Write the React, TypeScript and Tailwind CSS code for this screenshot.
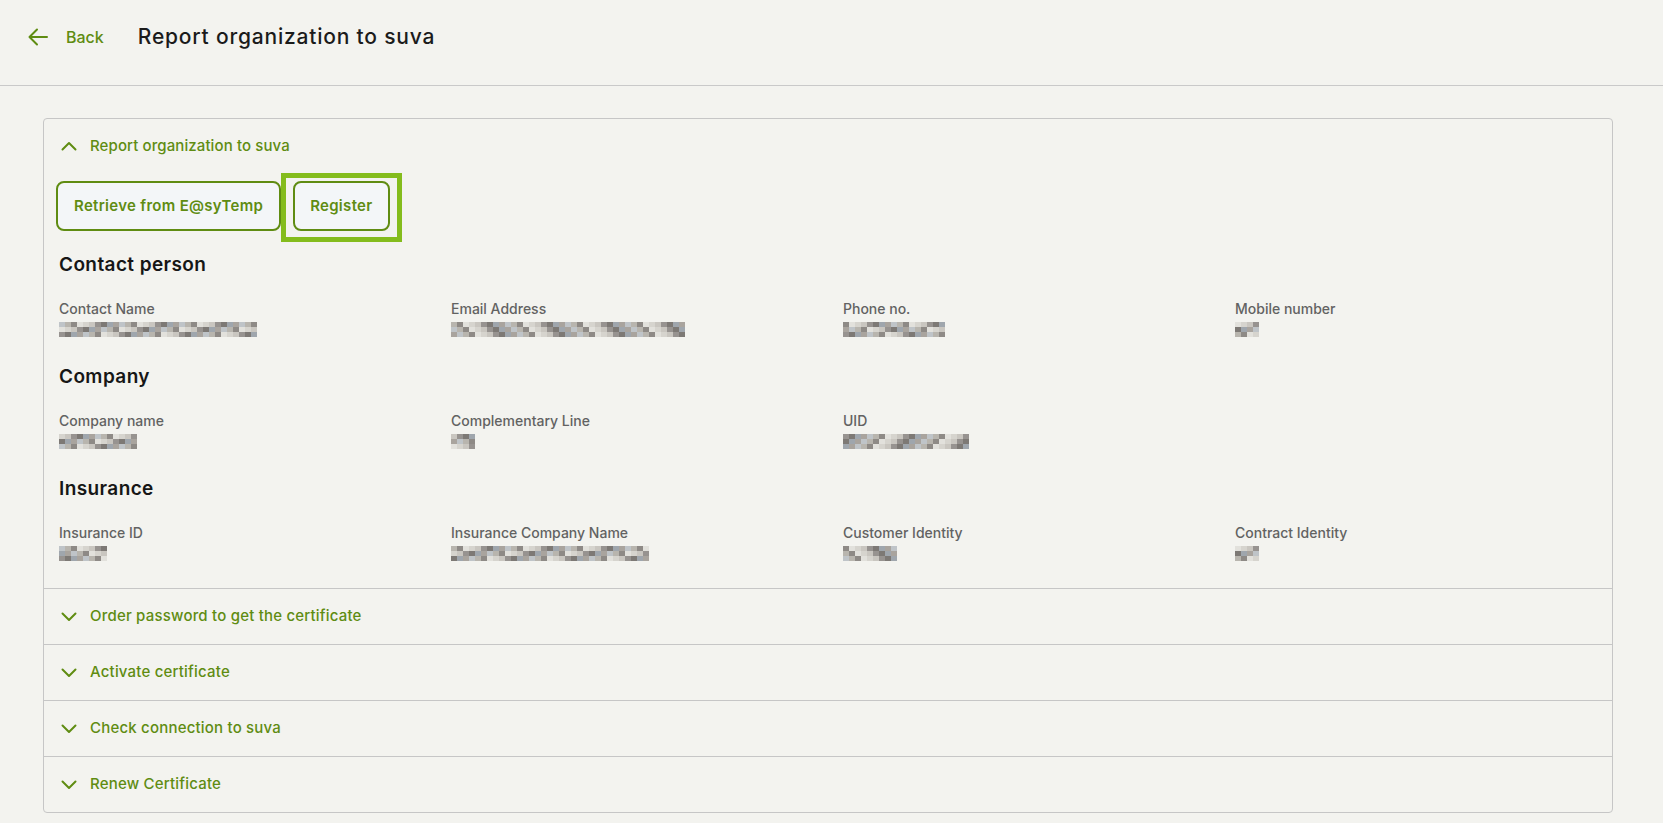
import { ReactNode } from "react";

const font = { fontFamily: "Inter, 'Noto Sans', sans-serif" };

// greys used to fake the obscured field values
const tones = [
  "bg-[#a9a49e]",
  "bg-[#8e8a86]",
  "bg-[#c9c6c0]",
  "bg-[#9fa6ad]",
  "bg-[#b8b5ae]",
  "bg-[#d6d4ce]",
  "bg-[#7d7975]",
  "bg-[#bfc4c8]",
  "bg-[#e2e1dc]",
  "bg-[#979390]",
];

function Redacted({ width, seed }: { width: number; seed: number }) {
  const cols = Math.max(1, Math.round(width / 6));
  const cells: ReactNode[] = [];
  let s = seed * 9301 + 49297;
  for (let r = 0; r < 3; r++) {
    for (let c = 0; c < cols; c++) {
      s = (s * 9301 + 49297) % 233280;
      const tone = tones[s % tones.length];
      cells.push(<span key={`${r}-${c}`} className={`block h-[5px] w-[6px] ${tone}`} />);
    }
  }
  return (
    <div className="mt-[3px] grid h-[15px] w-max" style={{ gridTemplateColumns: `repeat(${cols}, 6px)` }}>
      {cells}
    </div>
  );
}

function ChevronDown() {
  return (
    <svg width="16" height="10" viewBox="0 0 16 10" fill="none" stroke="#5f8c12" strokeWidth="2" strokeLinecap="round" strokeLinejoin="round">
      <path d="M1.5 1.5 8 8l6.5-6.5" />
    </svg>
  );
}

function ChevronUp() {
  return (
    <svg width="16" height="10" viewBox="0 0 16 10" fill="none" stroke="#5f8c12" strokeWidth="2" strokeLinecap="round" strokeLinejoin="round">
      <path d="M1.5 8.5 8 2l6.5 6.5" />
    </svg>
  );
}

type Field = { label: string; width: number };

function FieldGrid({ fields, seed }: { fields: Field[]; seed: number }) {
  return (
    <div className="mt-[22px] grid grid-cols-4">
      {fields.map((f, i) => (
        <div key={f.label} className="px-[15px]">
          <div className="h-5 text-[14px] leading-5 font-medium text-[#626262]">{f.label}</div>
          <Redacted width={f.width} seed={seed + i * 7} />
        </div>
      ))}
    </div>
  );
}

function SectionTitle({ children, first }: { children: ReactNode; first?: boolean }) {
  return (
    <h2 className={`${first ? "mt-[22px]" : "mt-[28px]"} px-[15px] text-[19px] leading-6 font-semibold tracking-[0.4px] text-[#161616]`}>
      {children}
    </h2>
  );
}

function CollapsedRow({ title }: { title: string }) {
  return (
    <div className="flex h-[56px] items-center gap-[13px] border-t border-[#c6c6c6] pl-[17px]">
      <ChevronDown />
      <span className="text-[15px] font-medium tracking-[0.2px] text-[#5f8c12]">{title}</span>
    </div>
  );
}

export default function App() {
  return (
    <div className="min-h-screen bg-[#f3f3ef] pb-[11px]" style={font}>
      <header className="flex h-[86px] items-center border-b border-[#c9c9c9] pb-[11px]">
        <button className="ml-[28px] flex items-center gap-[18px] text-[#5f8c12]">
          <svg width="20" height="18" viewBox="0 0 20 18" fill="none" stroke="#5f8c12" strokeWidth="2" strokeLinecap="round" strokeLinejoin="round">
            <path d="M19 9H1.5M9 1.5 1.5 9 9 16.5" />
          </svg>
          <span className="text-[16px] font-medium">Back</span>
        </button>
        <h1 className="ml-[34px] text-[21px] font-medium tracking-[0.8px] text-[#1b1b1b]">Report organization to suva</h1>
      </header>

      <div className="ml-[43px] mr-[50px] mt-[32px] rounded-[4px] border border-[#c6c6c6]">
        <div className="pb-[27px]">
          <div className="flex h-[54px] items-center gap-[13px] pl-[17px]">
            <ChevronUp />
            <span className="text-[15px] font-medium tracking-[0.1px] text-[#5f8c12]">Report organization to suva</span>
          </div>

          <div className="mt-2 flex gap-[12px] px-[12px]">
            <button className="h-[50px] rounded-lg border-2 border-[#5f8c12] bg-[#f3f6f8] px-[16px] text-[15px] font-semibold tracking-[0.3px] text-[#5f8c12]">
              Retrieve from E@syTemp
            </button>
            <div className="relative">
              <button className="h-[50px] rounded-lg border-2 border-[#5f8c12] bg-[#f3f6f8] px-[15px] text-[15px] font-semibold tracking-[0.3px] text-[#5f8c12]">
                Register
              </button>
              <span className="pointer-events-none absolute -top-2 -bottom-[11px] -left-3 -right-3 border-[5px] border-[#84bc1c]" />
            </div>
          </div>

          <SectionTitle first>Contact person</SectionTitle>
          <FieldGrid
            seed={3}
            fields={[
              { label: "Contact Name", width: 198 },
              { label: "Email Address", width: 234 },
              { label: "Phone no.", width: 100 },
              { label: "Mobile number", width: 24 },
            ]}
          />

          <SectionTitle>Company</SectionTitle>
          <FieldGrid
            seed={11}
            fields={[
              { label: "Company name", width: 78 },
              { label: "Complementary Line", width: 24 },
              { label: "UID", width: 126 },
            ]}
          />

          <SectionTitle>Insurance</SectionTitle>
          <FieldGrid
            seed={23}
            fields={[
              { label: "Insurance ID", width: 48 },
              { label: "Insurance Company Name", width: 198 },
              { label: "Customer Identity", width: 54 },
              { label: "Contract Identity", width: 24 },
            ]}
          />
        </div>

        <CollapsedRow title="Order password to get the certificate" />
        <CollapsedRow title="Activate certificate" />
        <CollapsedRow title="Check connection to suva" />
        <CollapsedRow title="Renew Certificate" />
      </div>
    </div>
  );
}
